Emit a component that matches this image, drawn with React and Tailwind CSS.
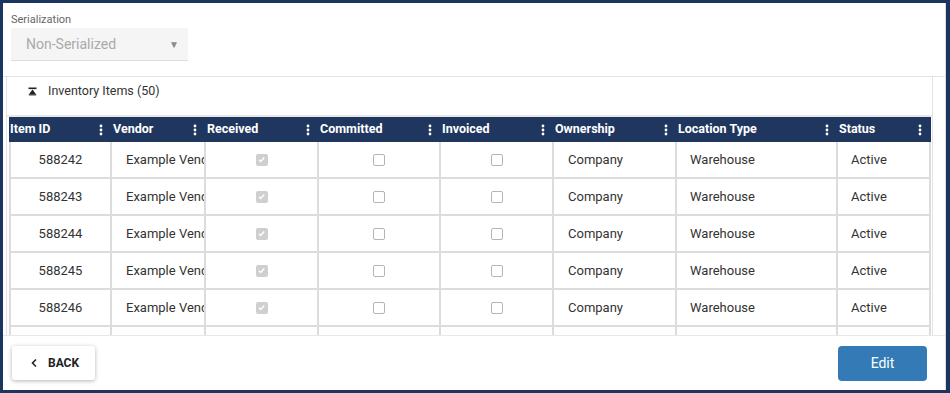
import React from 'react';

const columns = [
  { label: 'Item ID', width: 103 },
  { label: 'Vendor', width: 94 },
  { label: 'Received', width: 113 },
  { label: 'Committed', width: 122 },
  { label: 'Invoiced', width: 113 },
  { label: 'Ownership', width: 123 },
  { label: 'Location Type', width: 161 },
  { label: 'Status', width: 93 },
];

const rows = [588242, 588243, 588244, 588245, 588246, 588247];

const Dots = () => (
  <svg width="4" height="12" viewBox="0 0 4 12" className="shrink-0">
    <circle cx="2" cy="2" r="1.4" fill="#fff" />
    <circle cx="2" cy="6" r="1.4" fill="#fff" />
    <circle cx="2" cy="10" r="1.4" fill="#fff" />
  </svg>
);

const Checkbox = ({ checked }) =>
  checked ? (
    <span className="w-[12px] h-[12px] rounded-[2px] bg-[#cfcfcf] flex items-center justify-center">
      <svg width="9" height="9" viewBox="0 0 10 10">
        <path d="M2 5.2 L4.2 7.3 L8 2.8" stroke="#fff" strokeWidth="1.6" fill="none" />
      </svg>
    </span>
  ) : (
    <span className="w-[12px] h-[12px] rounded-[2px] bg-white border border-[#b5b5b5]" />
  );

const App = () => {
  return (
    <div
      className="w-[950px] h-[393px] bg-[#1c355e] pt-[3px] pl-[3px] pr-[4px] pb-[3px]"
      style={{ fontFamily: 'Roboto, "Liberation Sans", sans-serif' }}
    >
      <div className="w-full h-full bg-white border-r border-[#dcdcdc] flex flex-col">
        {/* Serialization */}
        <div className="h-[74px] border-b border-[#e3e3e3] pl-[8px] pt-[11px] shrink-0">
          <div className="text-[11px] leading-[12px] text-[#666]">Serialization</div>
          <div className="mt-[2px] w-[177px] h-[33px] bg-[#f5f5f5] border-b border-[#dedede] flex items-center justify-between pl-[15px] pr-[9px]">
            <span className="text-[14px] text-[#aaaaaa]">Non-Serialized</span>
            <span className="text-[10px] text-[#8c8c8c]">▼</span>
          </div>
        </div>

        {/* Inventory panel */}
        <div className="flex-1 min-h-0 ml-[3px] mr-[12px] border-l border-r border-[#e3e3e3] flex flex-col overflow-hidden">
          <div className="h-[40px] shrink-0 border-b-2 border-[#e8e8e8] flex items-start pt-[5px] pl-[21px]">
            <div className="h-[18px] flex items-center">
              <svg width="9" height="9" viewBox="0 0 9 9" className="mr-[11px]">
                <rect x="0.5" y="0.5" width="8" height="1.6" fill="#222" />
                <path d="M4.5 2.6 L8.2 7.4 L0.8 7.4 Z" fill="#222" />
                <rect x="0.8" y="7.4" width="7.4" height="1" fill="#222" />
              </svg>
              <span className="text-[12.5px] text-[#333]">Inventory Items (50)</span>
            </div>
          </div>

          <div className="pl-[2px] flex flex-col min-h-0 overflow-hidden">
            {/* header */}
            <div className="flex h-[25px] bg-[#1f365f] w-[922px] shrink-0">
              {columns.map((c) => (
                <div
                  key={c.label}
                  style={{ width: c.width }}
                  className="flex items-center justify-between pl-[1px] pr-[9px] shrink-0"
                >
                  <span className="text-[12.5px] font-bold text-white whitespace-nowrap">{c.label}</span>
                  <Dots />
                </div>
              ))}
            </div>

            {/* body */}
            <div className="flex flex-col">
              {rows.map((id) => (
                <div key={id} className="flex h-[37px] shrink-0 w-[922px] text-[13px] text-[#333]">
                  <div className="w-[103px] border-l-2 border-r-2 border-b-2 border-[#dcdcdc] flex items-center justify-center">
                    {id}
                  </div>
                  <div className="w-[94px] border-r-2 border-b-2 border-[#dcdcdc] flex items-center pl-[14px] overflow-hidden whitespace-nowrap">
                    Example Vendor
                  </div>
                  <div className="w-[113px] border-r-2 border-b-2 border-[#dcdcdc] flex items-center justify-center">
                    <Checkbox checked />
                  </div>
                  <div className="w-[122px] border-r-2 border-b-2 border-[#dcdcdc] flex items-center justify-center">
                    <Checkbox />
                  </div>
                  <div className="w-[113px] border-r-2 border-b-2 border-[#dcdcdc] flex items-center justify-center">
                    <Checkbox />
                  </div>
                  <div className="w-[123px] border-r-2 border-b-2 border-[#dcdcdc] flex items-center pl-[14px]">
                    Company
                  </div>
                  <div className="w-[161px] border-r-2 border-b-2 border-[#dcdcdc] flex items-center pl-[13px]">
                    Warehouse
                  </div>
                  <div className="w-[93px] border-r-2 border-b-2 border-[#dcdcdc] flex items-center pl-[13px]">
                    Active
                  </div>
                </div>
              ))}
            </div>
          </div>
        </div>

        {/* Footer */}
        <div className="h-[55px] shrink-0 border-t border-[#e8e8e8] flex items-start justify-between pt-[10px] pl-[9px] pr-[18px]">
          <button className="w-[83px] h-[34px] bg-white rounded-[3px] shadow-[0_1px_4px_rgba(0,0,0,0.3)] flex items-center pl-[18px] gap-[10px]">
            <svg width="8" height="10" viewBox="0 0 8 10">
              <path d="M6 1.5 L2.5 5 L6 8.5" stroke="#222" strokeWidth="1.6" fill="none" />
            </svg>
            <span className="text-[12px] font-bold text-[#222]">BACK</span>
          </button>
          <button className="w-[89px] h-[35px] bg-[#337ab7] rounded-[4px] flex items-center justify-center text-[14px] text-white">
            Edit
          </button>
        </div>
      </div>
    </div>
  );
};

export default App;
